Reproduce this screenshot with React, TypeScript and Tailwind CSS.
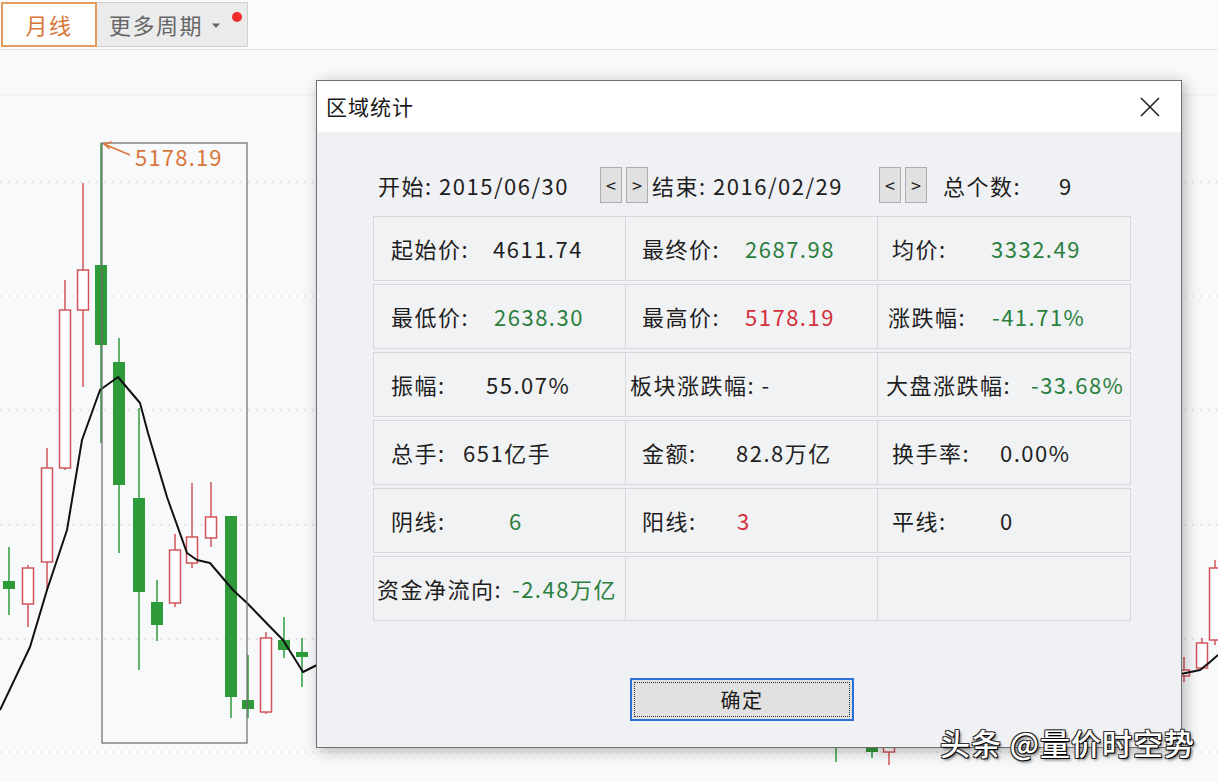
import React from 'react';

type Candle = [number, number, number, number, number, 'g' | 'r'];

// x, wickTop, bodyTop, bodyBottom, wickBottom, colour
const CANDLES: Candle[] = [
    [9, 547, 581, 589, 615, 'g'],
    [28, 565, 568, 604, 627, 'r'],
    [47, 448, 468, 562, 590, 'r'],
    [65, 280, 310, 468, 470, 'r'],
    [83, 183, 270, 310, 387, 'r'],
    [101, 143, 265, 345, 443, 'g'],
    [119, 338, 362, 485, 553, 'g'],
    [139, 408, 498, 592, 670, 'g'],
    [157, 580, 602, 625, 641, 'g'],
    [175, 534, 550, 603, 607, 'r'],
    [192, 483, 537, 563, 568, 'r'],
    [211, 482, 517, 538, 547, 'r'],
    [231, 516, 516, 697, 718, 'g'],
    [248, 655, 700, 709, 718, 'g'],
    [266, 632, 638, 712, 714, 'r'],
    [284, 617, 640, 650, 658, 'g'],
    [302, 638, 652, 657, 687, 'g'],
    [836, 700, 720, 730, 762, 'g'],
    [872, 720, 740, 752, 758, 'g'],
    [889, 730, 740, 752, 765, 'r'],
    [1184, 657, 670, 676, 682, 'r'],
    [1202, 638, 643, 668, 670, 'r'],
    [1215, 560, 568, 640, 645, 'r'],
];

const MA = '0,710 30,647 47,590 67,530 82,440 100,390 118,377 140,403 148,433 167,497 187,553 197,560 210,563 233,590 247,603 283,640 303,672 317,665 1181,674 1200,670 1210,662 1218,655';

const GRID_Y = [182, 296, 410, 525, 639, 752];

function Chart() {
    return (
        <svg width="1218" height="732" viewBox="0 50 1218 732" className="block">
            <line x1="0" y1="95" x2="1218" y2="95" stroke="#ececec" strokeWidth="1" />
            {GRID_Y.map((y) => (
                <line key={y} x1="0" y1={y} x2="1218" y2={y} stroke="#d4d4d4" strokeWidth="1" strokeDasharray="2 6" />
            ))}
            {CANDLES.map(([x, wt, bt, bb, wb, c], i) => {
                const col = c === 'g' ? '#2f9a3a' : '#d2545a';
                return (
                    <g key={i}>
                        <line x1={x} y1={wt} x2={x} y2={bt} stroke={col} strokeWidth="1.5" />
                        <line x1={x} y1={bb} x2={x} y2={wb} stroke={col} strokeWidth="1.5" />
                        {c === 'g' ? (
                            <rect x={x - 6} y={bt} width="12" height={Math.max(bb - bt, 2)} fill={col} />
                        ) : (
                            <rect x={x - 5.5} y={bt} width="11" height={Math.max(bb - bt, 2)} fill="#ffffff" stroke={col} strokeWidth="1.5" />
                        )}
                    </g>
                );
            })}
            <polyline points={MA} fill="none" stroke="#111111" strokeWidth="2" strokeLinejoin="round" />
            <rect x="102" y="143" width="145" height="600" fill="none" stroke="#6b6b6b" strokeWidth="1.2" />
            <line x1="104" y1="144" x2="130" y2="155" stroke="#d9773a" strokeWidth="1.5" />
            <polyline points="112,142 104,144 110,149" fill="none" stroke="#d9773a" strokeWidth="1.5" />
            <text x="135" y="166" fill="#d9773a" fontSize="22" fontFamily="'Noto Sans CJK SC', sans-serif" letterSpacing="1.2">5178.19</text>
        </svg>
    );
}

interface CellProps {
    label?: string;
    value?: string;
    color?: string;
    pad: string;
    lw: string;
    first?: boolean;
}

function Cell({ label, value, color = 'text-[#1e1e1e]', pad, lw, first }: CellProps) {
    return (
        <div className={`h-[65px] border border-[#d6d8dc] bg-[#f1f2f4] flex items-center ${pad} ${first ? '' : 'border-l-0'}`}>
            {label && <span className={`${lw} shrink-0 text-[#1e1e1e]`}>{label}</span>}
            {value && <span className={color}>{value}</span>}
        </div>
    );
}

const GREEN = 'text-[#2b7f3e]';
const RED = 'text-[#d3303b]';

function ArrowBtns() {
    return (
        <div className="flex gap-[4px] shrink-0">
            <div className="w-[22px] h-[36px] bg-[#e1e1e1] border border-[#adadad] flex items-center justify-center text-[18px] tracking-normal text-[#222]">&lt;</div>
            <div className="w-[22px] h-[36px] bg-[#e1e1e1] border border-[#adadad] flex items-center justify-center text-[18px] tracking-normal text-[#222]">&gt;</div>
        </div>
    );
}

function Dialog() {
    return (
        <div className="absolute left-[316px] top-[80px] w-[866px] h-[668px] border border-[#6f6f6f] bg-[#f0f1f4] shadow-[3px_3px_14px_rgba(0,0,0,0.28)] flex flex-col">
            <div className="h-[51px] bg-white flex items-center justify-between pl-[9px] pr-[20px]">
                <span className="text-[21px] tracking-[1px] text-[#1a1a1a]">区域统计</span>
                <svg width="22" height="22" viewBox="0 0 22 22">
                    <path d="M2 2L20 20M20 2L2 20" stroke="#222" strokeWidth="1.6" />
                </svg>
            </div>
            <div className="flex items-center pl-[61px] mt-[35px] h-[36px] text-[#1e1e1e]">
                <span className="w-[222px] shrink-0">开始: 2015/06/30</span>
                <ArrowBtns />
                <span className="w-[231px] shrink-0 pl-[4px]">结束: 2016/02/29</span>
                <ArrowBtns />
                <span className="w-[132px] shrink-0 pl-[16px]">总个数:</span>
                <span>9</span>
            </div>
            <div className="ml-[56px] mt-[13px] grid grid-cols-[253px_252px_253px] gap-y-[3px]">
                <Cell first pad="pl-[17px]" lw="w-[102px]" label="起始价:" value="4611.74" />
                <Cell pad="pl-[16px]" lw="w-[103px]" label="最终价:" value="2687.98" color={GREEN} />
                <Cell pad="pl-[14px]" lw="w-[99px]" label="均价:" value="3332.49" color={GREEN} />

                <Cell first pad="pl-[17px]" lw="w-[103px]" label="最低价:" value="2638.30" color={GREEN} />
                <Cell pad="pl-[16px]" lw="w-[103px]" label="最高价:" value="5178.19" color={RED} />
                <Cell pad="pl-[10px]" lw="w-[104px]" label="涨跌幅:" value="-41.71%" color={GREEN} />

                <Cell first pad="pl-[17px]" lw="w-[95px]" label="振幅:" value="55.07%" />
                <Cell pad="pl-[4px]" lw="w-auto" label="板块涨跌幅: -" />
                <Cell pad="pl-[8px]" lw="w-[145px]" label="大盘涨跌幅:" value="-33.68%" color={GREEN} />

                <Cell first pad="pl-[17px]" lw="w-[72px]" label="总手:" value="651亿手" />
                <Cell pad="pl-[16px]" lw="w-[94px]" label="金额:" value="82.8万亿" />
                <Cell pad="pl-[14px]" lw="w-[108px]" label="换手率:" value="0.00%" />

                <Cell first pad="pl-[17px]" lw="w-[118px]" label="阴线:" value="6" color={GREEN} />
                <Cell pad="pl-[16px]" lw="w-[95px]" label="阳线:" value="3" color={RED} />
                <Cell pad="pl-[14px]" lw="w-[108px]" label="平线:" value="0" />

                <Cell first pad="pl-[3px]" lw="w-[135px]" label="资金净流向:" value="-2.48万亿" color={GREEN} />
                <Cell pad="" lw="" />
                <Cell pad="" lw="" />
            </div>
            <div className="ml-[313px] mt-[57px] w-[224px] h-[43px] border-2 border-[#2b6fd6] bg-[#e1e1e1] p-[2px]">
                <div className="w-full h-full border border-dotted border-[#333] flex items-center justify-center text-[20px] text-[#1a1a1a]">
                    确定
                </div>
            </div>
        </div>
    );
}

export default function App() {
    return (
        <div className="relative w-[1218px] h-[782px] overflow-hidden bg-[#f8f9fa] text-[22px] tracking-[1.5px] font-['Noto_Sans_CJK_SC','Noto_Sans',sans-serif]">
            <div className="h-[50px] bg-[#fbfbfb] border-b border-[#e4e4e4] flex items-start pt-[2px]">
                <div className="w-[96px] h-[45px] ml-[1px] border-2 border-[#e39a5e] bg-white flex items-center justify-center text-[#d9773a]">
                    月线
                </div>
                <div className="relative w-[151px] h-[45px] bg-[#ebebeb] border border-[#cfcfcf] border-l-0 flex items-center pl-[12px] text-[#666]">
                    <span>更多周期</span>
                    <svg width="10" height="6" viewBox="0 0 10 6" className="ml-[8px] mt-[2px]">
                        <path d="M1 0.5h8L5 5z" fill="#666" />
                    </svg>
                    <span className="absolute left-[135px] top-[9px] w-[10px] h-[10px] rounded-full bg-[#ef2b2b]" />
                </div>
            </div>
            <Chart />
            <Dialog />
            <div className="absolute left-[940px] top-[720px] text-[30px] tracking-[1px] font-medium text-white [text-shadow:1px_1px_0_#000,-1px_-1px_0_#333,1px_-1px_0_#333,-1px_1px_0_#333,2px_2px_3px_rgba(0,0,0,0.6)]">
                头条 @量价时空势
            </div>
        </div>
    );
}
